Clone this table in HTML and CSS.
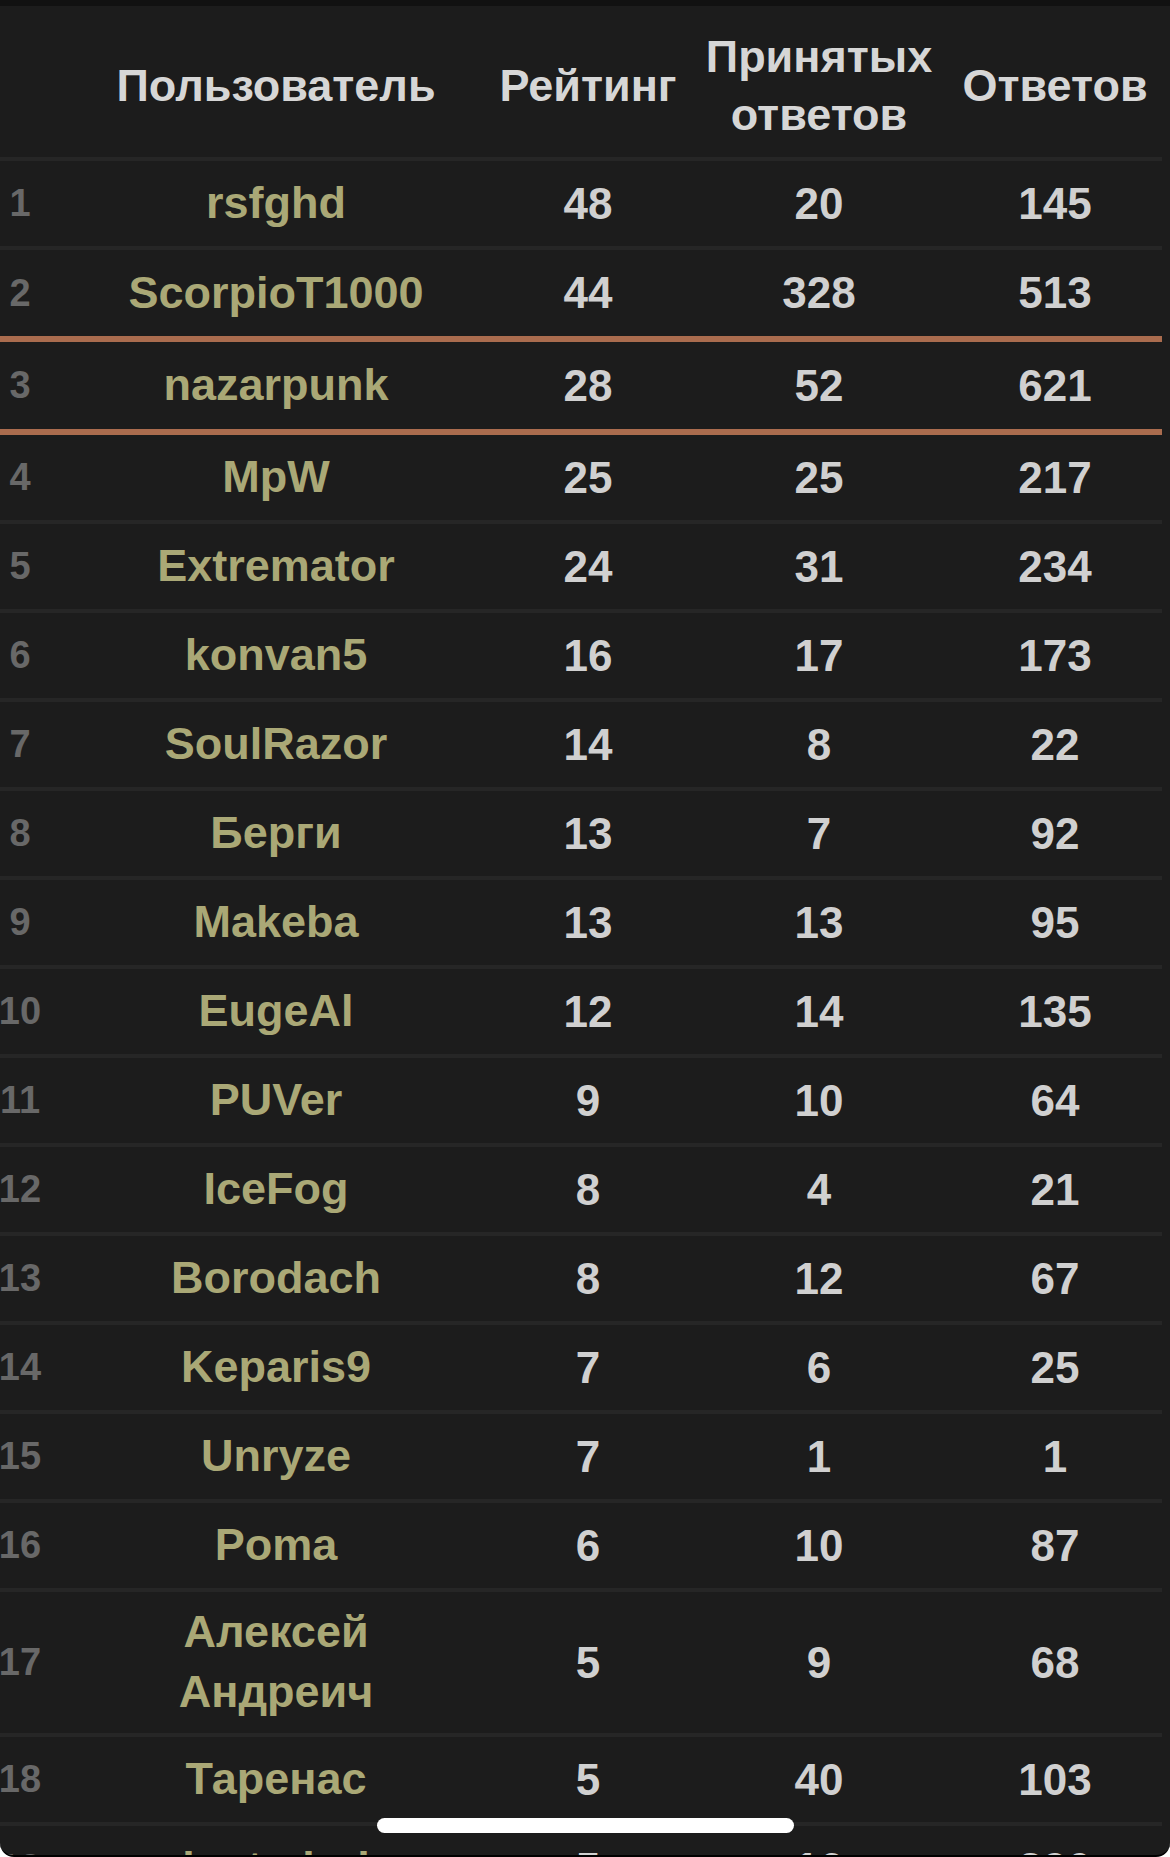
FILE: index.html
```html
<!DOCTYPE html>
<html lang="ru">
<head>
    <meta charset="UTF-8">
    <meta name="viewport" content="width=device-width, initial-scale=1.0">
    <title>Рейтинг пользователей</title>
    <link rel="stylesheet" href="styles.css">
</head>
<body>

<div class="screen">
    <div class="rating">
        <div class="row head">
            <div class="cell rank"></div>
            <div class="cell name">Пользователь</div>
            <div class="cell">Рейтинг</div>
            <div class="cell accepted">Принятых ответов</div>
            <div class="cell last">Ответов</div>
        </div>

        <div class="row">
            <div class="cell rank">1</div>
            <div class="cell name">rsfghd</div>
            <div class="cell">48</div>
            <div class="cell">20</div>
            <div class="cell last">145</div>
        </div>
        <div class="row above-me">
            <div class="cell rank">2</div>
            <div class="cell name">ScorpioT1000</div>
            <div class="cell">44</div>
            <div class="cell">328</div>
            <div class="cell last">513</div>
        </div>
        <div class="row me">
            <div class="cell rank">3</div>
            <div class="cell name">nazarpunk</div>
            <div class="cell">28</div>
            <div class="cell">52</div>
            <div class="cell last">621</div>
        </div>
        <div class="row">
            <div class="cell rank">4</div>
            <div class="cell name">MpW</div>
            <div class="cell">25</div>
            <div class="cell">25</div>
            <div class="cell last">217</div>
        </div>
        <div class="row">
            <div class="cell rank">5</div>
            <div class="cell name">Extremator</div>
            <div class="cell">24</div>
            <div class="cell">31</div>
            <div class="cell last">234</div>
        </div>
        <div class="row">
            <div class="cell rank">6</div>
            <div class="cell name">konvan5</div>
            <div class="cell">16</div>
            <div class="cell">17</div>
            <div class="cell last">173</div>
        </div>
        <div class="row">
            <div class="cell rank">7</div>
            <div class="cell name">SoulRazor</div>
            <div class="cell">14</div>
            <div class="cell">8</div>
            <div class="cell last">22</div>
        </div>
        <div class="row">
            <div class="cell rank">8</div>
            <div class="cell name">Берги</div>
            <div class="cell">13</div>
            <div class="cell">7</div>
            <div class="cell last">92</div>
        </div>
        <div class="row">
            <div class="cell rank">9</div>
            <div class="cell name">Makeba</div>
            <div class="cell">13</div>
            <div class="cell">13</div>
            <div class="cell last">95</div>
        </div>
        <div class="row">
            <div class="cell rank">10</div>
            <div class="cell name">EugeAl</div>
            <div class="cell">12</div>
            <div class="cell">14</div>
            <div class="cell last">135</div>
        </div>
        <div class="row">
            <div class="cell rank">11</div>
            <div class="cell name">PUVer</div>
            <div class="cell">9</div>
            <div class="cell">10</div>
            <div class="cell last">64</div>
        </div>
        <div class="row">
            <div class="cell rank">12</div>
            <div class="cell name">IceFog</div>
            <div class="cell">8</div>
            <div class="cell">4</div>
            <div class="cell last">21</div>
        </div>
        <div class="row">
            <div class="cell rank">13</div>
            <div class="cell name">Borodach</div>
            <div class="cell">8</div>
            <div class="cell">12</div>
            <div class="cell last">67</div>
        </div>
        <div class="row">
            <div class="cell rank">14</div>
            <div class="cell name">Keparis9</div>
            <div class="cell">7</div>
            <div class="cell">6</div>
            <div class="cell last">25</div>
        </div>
        <div class="row">
            <div class="cell rank">15</div>
            <div class="cell name">Unryze</div>
            <div class="cell">7</div>
            <div class="cell">1</div>
            <div class="cell last">1</div>
        </div>
        <div class="row">
            <div class="cell rank">16</div>
            <div class="cell name">Poma</div>
            <div class="cell">6</div>
            <div class="cell">10</div>
            <div class="cell last">87</div>
        </div>
        <div class="row">
            <div class="cell rank">17</div>
            <div class="cell name">Алексей Андреич</div>
            <div class="cell">5</div>
            <div class="cell">9</div>
            <div class="cell last">68</div>
        </div>
        <div class="row">
            <div class="cell rank">18</div>
            <div class="cell name">Таренас</div>
            <div class="cell">5</div>
            <div class="cell">40</div>
            <div class="cell last">103</div>
        </div>
        <div class="row">
            <div class="cell rank">19</div>
            <div class="cell name">lostmind</div>
            <div class="cell">5</div>
            <div class="cell">16</div>
            <div class="cell last">390</div>
        </div>
    </div>

    <div class="home-bar"></div>
</div>

</body>
</html>
```

FILE: styles.css
```css
body {
    margin: 0;
    background-color: #ffffff;
    font-family: 'Liberation Sans', Arial, sans-serif;
    font-weight: bold;
}

.screen {
    position: relative;
    height: 1857px;
    box-sizing: border-box;
    border-top: 6px solid #111111;
    border-bottom: 2px solid #000000;
    border-radius: 0 0 14px 14px;
    background-color: #1c1c1c;
    overflow: hidden;
}

.rating {
    width: 1162px;
}

.row {
    display: grid;
    grid-template-columns: 40px 472px 152px 310px 188px;
    min-height: 85px;
    border-bottom: 4px solid #262626;
    color: #d0d0d0;
    font-size: 44px;
}

.row.head {
    min-height: 151px;
    color: #d6d6d6;
    font-size: 45px;
}

.row.head .cell {
    padding-top: 8px;
    line-height: 58px;
}

.row.above-me {
    min-height: 86px;
    border-bottom: 6px solid #aa6c4e;
}

.row.me {
    min-height: 87px;
    border-bottom: 6px solid #aa6c4e;
}

.cell {
    display: flex;
    align-items: center;
    justify-content: center;
    text-align: center;
    white-space: nowrap;
}

.cell.rank {
    color: #686868;
    font-size: 38px;
}

.cell.name {
    padding: 10px 50px 11px;
    font-size: 45px;
    line-height: 60px;
    white-space: normal;
    color: #aaa876;
}

.row.head .cell.name {
    padding-bottom: 0;
    color: #d6d6d6;
}

.cell.last {
    padding-right: 26px;
}

.cell.accepted {
    white-space: normal;
    padding-left: 40px;
    padding-right: 40px;
}

.home-bar {
    position: absolute;
    left: 377px;
    top: 1812px;
    width: 417px;
    height: 15px;
    border-radius: 8px;
    background-color: #ffffff;
}
```
